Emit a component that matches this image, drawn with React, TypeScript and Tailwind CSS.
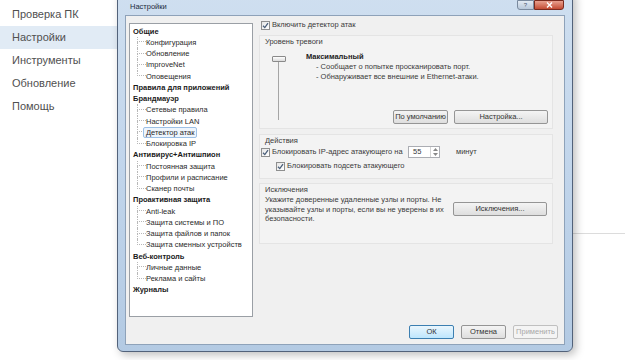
import React from "react";

const font = { fontFamily: '"Liberation Sans", Arial, sans-serif' };

interface TreeGroup {
  title: string;
  items: string[];
}

const tree: TreeGroup[] = [
  { title: "Общие", items: ["Конфигурация", "Обновление", "ImproveNet", "Оповещения"] },
  { title: "Правила для приложений", items: [] },
  { title: "Брандмауэр", items: ["Сетевые правила", "Настройки LAN", "Детектор атак", "Блокировка IP"] },
  { title: "Антивирус+Антишпион", items: ["Постоянная защита", "Профили и расписание", "Сканер почты"] },
  {
    title: "Проактивная защита",
    items: ["Anti-leak", "Защита системы и ПО", "Защита файлов и папок", "Защита сменных устройств"],
  },
  { title: "Веб-контроль", items: ["Личные данные", "Реклама и сайты"] },
  { title: "Журналы", items: [] },
];

const sideItems = ["Проверка ПК", "Настройки", "Инструменты", "Обновление", "Помощь"];

const CheckBox = ({ checked = true }: { checked?: boolean }) => (
  <div className="w-[9px] h-[9px] shrink-0 border border-[#8e8f8f] bg-gradient-to-br from-[#e6e6e6] to-white flex items-center justify-center">
    {checked && (
      <svg width="7" height="7" viewBox="0 0 7 7">
        <path d="M1 3.8 L2.8 5.6 L6 1.2" fill="none" stroke="#4a5f7a" strokeWidth="1.3" />
      </svg>
    )}
  </div>
);

const WinButton = ({
  label,
  width,
  primary,
  disabled,
}: {
  label: string;
  width: string;
  primary?: boolean;
  disabled?: boolean;
}) => (
  <div
    className={`${width} h-[14px] rounded-[2px] border flex items-center justify-center text-[7.5px] ${
      primary
        ? "border-[#3c7fb1] bg-gradient-to-b from-[#eaf6fd] to-[#bee6fd] text-[#333]"
        : disabled
          ? "border-[#c0c0c0] bg-[#f4f4f4] text-[#a8a8a8]"
          : "border-[#959595] bg-gradient-to-b from-[#f4f4f4] to-[#dedede] text-[#333]"
    }`}
  >
    {label}
  </div>
);

const TreeChild = ({ label, last, selected }: { label: string; last: boolean; selected: boolean }) => (
  <div className="flex h-[11.25px] items-stretch">
    <div className="w-[4px]" />
    <div className="w-[9px] flex flex-col">
      <div className="h-1/2 border-l border-b border-dotted border-[#b8b8b8]" />
      <div className={`h-1/2 ${last ? "" : "border-l border-dotted border-[#b8b8b8]"}`} />
    </div>
    <span
      className={`flex items-center whitespace-nowrap ${
        selected ? "border border-[#9cc0e6] bg-[#eef5fd] rounded-[2px] px-[2px] -ml-[3px]" : ""
      }`}
    >
      {label}
    </span>
  </div>
);

export default function App() {
  return (
    <div className="w-[640px] h-[360px] bg-white relative overflow-hidden flex" style={font}>
      {/* page underneath */}
      <div className="w-[118px] flex flex-col pt-[3px]">
        {sideItems.map((s) => (
          <div
            key={s}
            className={`h-[23px] flex items-center pl-[12px] text-[11px] text-[#505050] ${
              s === "Настройки" ? "bg-[#e1ebf5]" : ""
            }`}
          >
            {s}
          </div>
        ))}
      </div>
      <div className="flex-1 pt-[233px] pr-[15px]">
        <div className="border-t border-[#dcdcdc]" />
      </div>

      {/* dialog window */}
      <div className="absolute left-[117px] top-[-10px] w-[456px] h-[362px] rounded-[6px] border border-[#52627a] bg-gradient-to-b from-[#cfdff0] via-[#c1d5eb] to-[#b3cae3] shadow-[3px_3px_8px_rgba(0,0,0,0.25)] flex flex-col px-[7px] pb-[6px]">
        <div className="h-[24px] relative flex items-center pt-[8px] pl-[5px] text-[7.5px] text-[#1b2a3c]">
          Настройки
          <div className="absolute top-[9px] right-[1px] flex">
            <div className="w-[17px] h-[10px] border border-[#7a8a9e] rounded-bl-[3px] bg-gradient-to-b from-[#e2eaf3] to-[#b8c8da] flex items-center justify-center text-[6px] text-[#4a5a6e]">
              ?
            </div>
            <div className="w-[30px] h-[10px] border border-[#7a2a1e] rounded-br-[3px] bg-gradient-to-b from-[#e8a08f] to-[#c24a32] flex items-center justify-center">
              <svg width="7" height="6" viewBox="0 0 7 6">
                <path d="M1 0.5 L6 5.5 M6 0.5 L1 5.5" stroke="white" strokeWidth="1.4" />
              </svg>
            </div>
          </div>
        </div>

        <div className="flex-1 border border-[#8ea2b9] bg-[#f0f0f0] flex flex-col pt-[4px] pl-[3px] pr-[6px] text-[7.5px] text-[#3a3a3a]">
          <div className="flex gap-[6px] pr-[5px]">
            {/* tree */}
            <div className="w-[124px] h-[294px] mt-[3px] border border-[#9a9fa5] bg-white pt-[1.5px] px-[3px] text-[#2a2a2a] leading-[11.25px]">
              {tree.map((g) => (
                <div key={g.title}>
                  <div className="h-[11.25px] font-bold whitespace-nowrap text-[#1a1a1a]">{g.title}</div>
                  {g.items.map((it, i) => (
                    <TreeChild key={it} label={it} last={i === g.items.length - 1} selected={it === "Детектор атак"} />
                  ))}
                </div>
              ))}
            </div>

            {/* right panel */}
            <div className="flex-1 flex flex-col">
              <div className="h-[10px] flex items-center gap-[2px] pl-[2px]">
                <CheckBox />
                <span>Включить детектор атак</span>
              </div>

              <div className="mt-[5px] h-[94px] border border-[#e4e4e4] bg-[#f3f3f3] flex flex-col">
                <div className="h-[10px] mt-[1px] pl-[5px] flex items-center">Уровень тревоги</div>
                <div className="flex flex-1">
                  <div className="w-[46px] flex flex-col pl-[12px] pt-[9px]">
                    <div className="w-[14px] h-[6px] rounded-[1px] border border-[#8a8a8a] bg-gradient-to-b from-white to-[#dadada]" />
                    <div className="ml-[6px] w-px h-[58px] bg-[#a5a5a5]" />
                  </div>
                  <div className="flex-1 flex flex-col pt-[5px]">
                    <div className="font-bold text-[#222] leading-[10px]">Максимальный</div>
                    <div className="pl-[10px] leading-[9.5px]">- Сообщает о попытке просканировать порт.</div>
                    <div className="pl-[10px] leading-[9.5px]">- Обнаруживает все внешние и Ethernet-атаки.</div>
                    <div className="mt-auto mb-[4px] mr-[4px] flex justify-end gap-[6px]">
                      <WinButton label="По умолчанию" width="w-[55px]" />
                      <WinButton label="Настройка..." width="w-[94px]" />
                    </div>
                  </div>
                </div>
              </div>

              <div className="mt-[5px] h-[45px] border border-[#e4e4e4] bg-[#f3f3f3] flex flex-col">
                <div className="h-[10px] mt-[1px] pl-[5px] flex items-center">Действия</div>
                <div className="h-[12px] flex items-center pl-[1px]">
                  <CheckBox />
                  <span className="ml-[2px] w-[136px]">Блокировать IP-адрес атакующего на</span>
                  <div className="w-[32px] h-[12px] border border-[#abadb3] bg-white flex">
                    <div className="flex-1 flex items-center pl-[4px]">55</div>
                    <div className="w-[9px] flex flex-col border-l border-[#d5d5d5]">
                      <div className="flex-1 flex items-center justify-center">
                        <svg width="5" height="3" viewBox="0 0 5 3">
                          <path d="M0 3 L2.5 0 L5 3 Z" fill="#888" />
                        </svg>
                      </div>
                      <div className="flex-1 flex items-center justify-center">
                        <svg width="5" height="3" viewBox="0 0 5 3">
                          <path d="M0 0 L2.5 3 L5 0 Z" fill="#888" />
                        </svg>
                      </div>
                    </div>
                  </div>
                  <span className="ml-[16px]">минут</span>
                </div>
                <div className="h-[10px] mt-[3px] flex items-center pl-[16px] gap-[2px]">
                  <CheckBox />
                  <span>Блокировать подсеть атакующего</span>
                </div>
              </div>

              <div className="mt-[4px] h-[61px] border border-[#e4e4e4] bg-[#f3f3f3] flex flex-col">
                <div className="h-[10px] mt-[1px] pl-[5px] flex items-center">Исключения</div>
                <div className="flex">
                  <div className="w-[185px] pl-[5px] leading-[9.5px]">
                    Укажите доверенные удаленные узлы и порты. Не указывайте узлы и порты, если вы не уверены в их
                    безопасности.
                  </div>
                  <div className="ml-auto mr-[5px] mt-[7px]">
                    <WinButton label="Исключения..." width="w-[94px]" />
                  </div>
                </div>
              </div>
            </div>
          </div>

          <div className="mt-[8px] flex justify-end gap-[7px]">
            <WinButton label="ОК" width="w-[45px]" primary />
            <WinButton label="Отмена" width="w-[45px]" />
            <WinButton label="Применить" width="w-[45px]" disabled />
          </div>
        </div>
      </div>
    </div>
  );
}
